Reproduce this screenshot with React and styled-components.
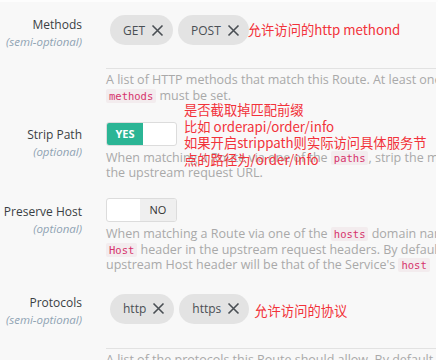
import styled, { createGlobalStyle } from "styled-components";

const Global = createGlobalStyle`
  html, body {
    margin: 0;
    padding: 0;
    background: #f8f8f8;
    overflow: hidden;
  }
  body {
    font-family: "Open Sans", "Noto Sans CJK SC", sans-serif;
    border-top: 2px solid #fdfdfd;
  }
`;

const Page = styled.div`
  position: relative;
  width: 438px;
  height: 358px;
  overflow: hidden;
  border-right: 2px solid #fff;
  box-sizing: border-box;
`;

const Row = styled.div`
  display: grid;
  grid-template-columns: 82px 1fr;
  column-gap: 24px;
  padding-top: ${({ top }) => top}px;
`;

const Label = styled.div`
  text-align: right;
  padding-top: ${({ offset }) => offset || 0}px;
`;

const Name = styled.div`
  font-size: 12px;
  line-height: 17px;
  color: #3a3f44;
  white-space: nowrap;
`;

const Hint = styled.div`
  font-size: 11.5px;
  line-height: 17px;
  font-style: italic;
  color: #8fa3b3;
  white-space: nowrap;
`;

const Field = styled.div`
  min-width: 0;
`;

const TagBox = styled.div`
  display: flex;
  align-items: flex-start;
  gap: 5px;
  height: ${({ h }) => h}px;
  padding-left: 4px;
  border-bottom: 1px solid #e2e2e2;
`;

const Chip = styled.div`
  display: flex;
  align-items: center;
  gap: 6px;
  height: 30px;
  padding: 0 9px 0 13px;
  border-radius: 15px;
  background: #e3e3e3;
  color: #4a4f54;
  font-size: 12px;
  white-space: nowrap;
`;

const Note = styled.span`
  line-height: 30px;
  color: #f2323a;
  font-family: "Noto Sans CJK SC", sans-serif;
  font-size: 13.3px;
  white-space: nowrap;
  margin-left: ${({ gap }) => gap || 0}px;
  margin-top: ${({ drop }) => drop || 0}px;
`;

const Help = styled.div`
  margin-top: ${({ top }) => top || 0}px;
  font-size: 12.5px;
  line-height: ${({ lh }) => lh || 15.5}px;
  color: #a9a9a9;
  white-space: nowrap;
`;

const Code = styled.code`
  font-family: "DejaVu Sans Mono", monospace;
  font-size: 10.5px;
  line-height: 1;
  color: #d6336c;
  background: #f3ecee;
  padding: 1px 3px;
  border-radius: 2px;
`;

const Toggle = styled.div`
  display: flex;
  width: 71px;
  height: 24px;
  border: 1px solid #dcdcdc;
  border-radius: 3px;
  background: #fff;
  box-sizing: border-box;
  overflow: hidden;
`;

const Knob = styled.div`
  width: 36px;
  display: flex;
  align-items: center;
  justify-content: center;
  font-size: 11px;
  font-weight: ${({ on }) => (on ? 700 : 400)};
  color: ${({ on }) => (on ? "#fff" : "#333")};
  background: ${({ on }) => (on ? "#2bb595" : "#efefef")};
  margin-left: ${({ on }) => (on ? 0 : "auto")};
`;

const Annotation = styled.div`
  position: absolute;
  left: 184px;
  top: 100px;
  color: #f2323a;
  font-family: "Noto Sans CJK SC", sans-serif;
  font-size: 13.3px;
  line-height: 16.5px;
  white-space: nowrap;
`;

const Cross = () => (
  <svg width="13" height="13" viewBox="0 0 13 13">
    <path d="M1.5 1.5 L11.5 11.5 M11.5 1.5 L1.5 11.5" stroke="#4a4f54" strokeWidth="1.6" fill="none" />
  </svg>
);

const App = () => (
  <Page>
    <Global />
    <Row top={13}>
      <Label offset={0.5}>
        <Name>Methods</Name>
        <Hint>(semi-optional)</Hint>
      </Label>
      <Field>
        <TagBox h={53}>
          <Chip>GET<Cross /></Chip>
          <Chip>POST<Cross /></Chip>
          <Note gap={-6}>允许访问的http methond</Note>
        </TagBox>
        <Help top={3}>A list of HTTP methods that match this Route. At least one of</Help>
        <Help><Code>methods</Code> must be set.</Help>
      </Field>
    </Row>

    <Row top={18.75}>
      <Label offset={4.5}>
        <Name>Strip Path</Name>
        <Hint>(optional)</Hint>
      </Label>
      <Field>
        <Toggle>
          <Knob on>YES</Knob>
        </Toggle>
        <Help top={4.5} lh={15}>When matching a Route via one of the <Code>paths</Code>, strip the matching</Help>
        <Help lh={15}>the upstream request URL.</Help>
      </Field>
    </Row>

    <Row top={17.5}>
      <Label offset={5.5}>
        <Name>Preserve Host</Name>
        <Hint>(optional)</Hint>
      </Label>
      <Field>
        <Toggle>
          <Knob>NO</Knob>
        </Toggle>
        <Help top={4.25}>When matching a Route via one of the <Code>hosts</Code> domain names,</Help>
        <Help><Code>Host</Code> header in the upstream request headers. By default set</Help>
        <Help>upstream Host header will be that of the Service's <Code>host</Code></Help>
      </Field>
    </Row>

    <Row top={21.25}>
      <Label offset={-0.5}>
        <Name>Protocols</Name>
        <Hint>(semi-optional)</Hint>
      </Label>
      <Field>
        <TagBox h={54}>
          <Chip>http<Cross /></Chip>
          <Chip>https<Cross /></Chip>
          <Note gap={0} drop={2}>允许访问的协议</Note>
        </TagBox>
        <Help top={3}>A list of the protocols this Route should allow. By default it is</Help>
      </Field>
    </Row>

    <Annotation>
      是否截取掉匹配前缀<br />
      比如 orderapi/order/info<br />
      如果开启strippath则实际访问具体服务节<br />
      点的路径为/order/info
    </Annotation>
  </Page>
);

export default App;
